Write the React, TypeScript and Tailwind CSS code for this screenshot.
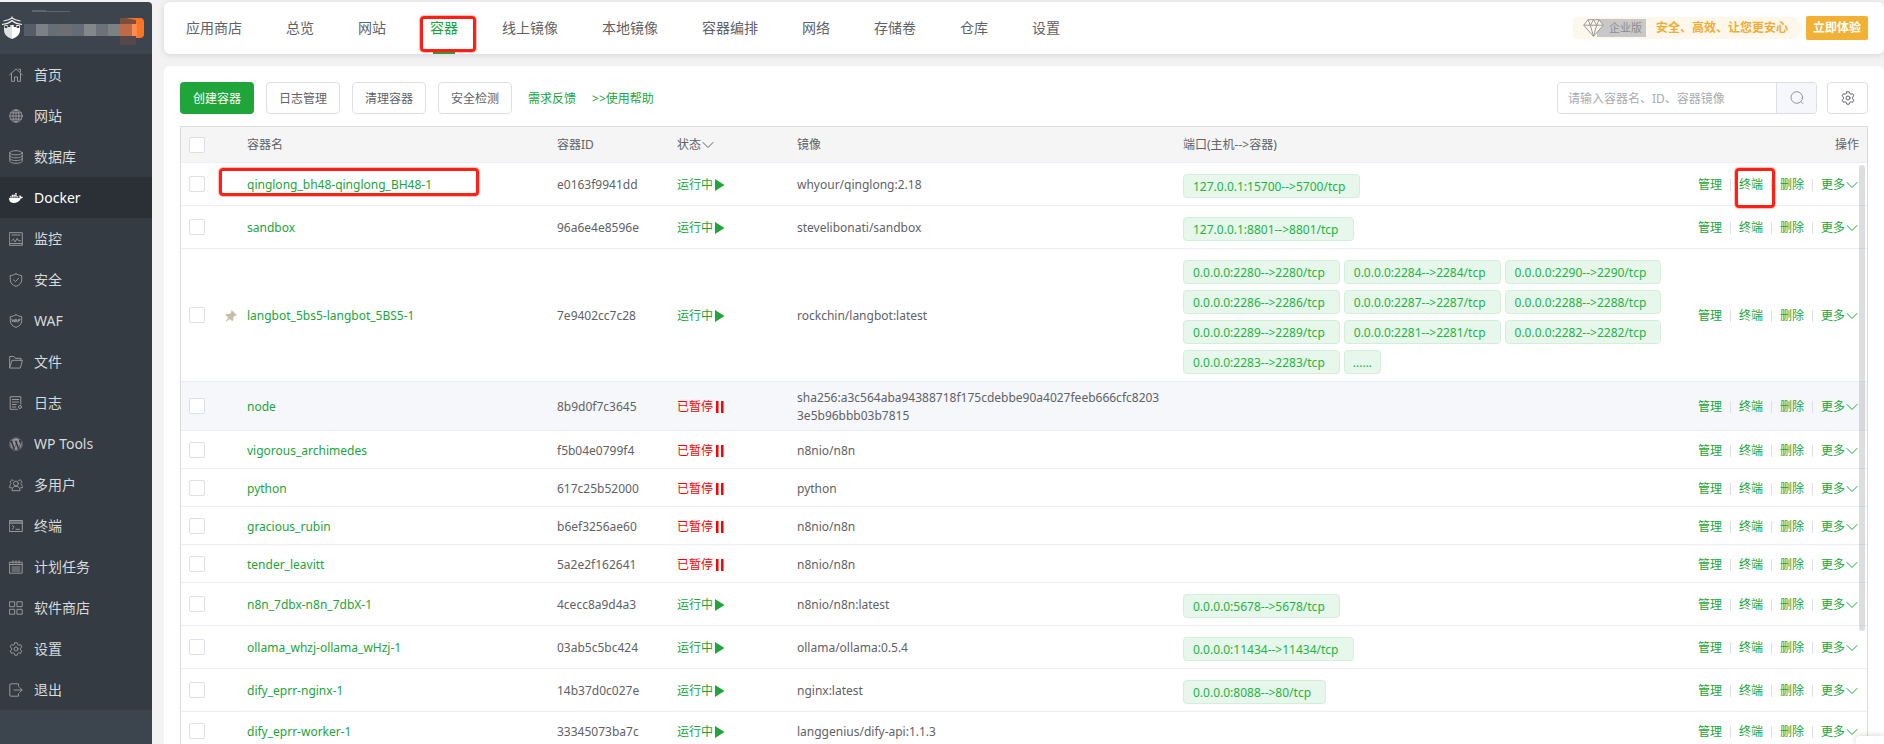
import type { FC, ReactNode } from "react";

import { FaDocker, FaWordpress } from 'react-icons/fa'

type Container = {
    name: string
    id: string
    running: boolean
    image: string
    ports?: string[]
    morePorts?: boolean
    pinned?: boolean
    hover?: boolean
    marked?: boolean
    height: string
}

const containers: Container[] = [
    { name: 'qinglong_bh48-qinglong_BH48-1', id: 'e0163f9941dd', running: true, image: 'whyour/qinglong:2.18', ports: ['127.0.0.1:15700-->5700/tcp'], marked: true, height: 'h-[43px]' },
    { name: 'sandbox', id: '96a6e4e8596e', running: true, image: 'stevelibonati/sandbox', ports: ['127.0.0.1:8801-->8801/tcp'], height: 'h-[43px]' },
    {
        name: 'langbot_5bs5-langbot_5BS5-1', id: '7e9402cc7c28', running: true, image: 'rockchin/langbot:latest', pinned: true, morePorts: true, height: 'h-[133px]',
        ports: [
            '0.0.0.0:2280-->2280/tcp', '0.0.0.0:2284-->2284/tcp', '0.0.0.0:2290-->2290/tcp',
            '0.0.0.0:2286-->2286/tcp', '0.0.0.0:2287-->2287/tcp', '0.0.0.0:2288-->2288/tcp',
            '0.0.0.0:2289-->2289/tcp', '0.0.0.0:2281-->2281/tcp', '0.0.0.0:2282-->2282/tcp',
            '0.0.0.0:2283-->2283/tcp',
        ],
    },
    { name: 'node', id: '8b9d0f7c3645', running: false, image: 'sha256:a3c564aba94388718f175cdebbe90a4027feeb666cfc82033e5b96bbb03b7815', hover: true, height: 'h-[49px]' },
    { name: 'vigorous_archimedes', id: 'f5b04e0799f4', running: false, image: 'n8nio/n8n', height: 'h-[38px]' },
    { name: 'python', id: '617c25b52000', running: false, image: 'python', height: 'h-[38px]' },
    { name: 'gracious_rubin', id: 'b6ef3256ae60', running: false, image: 'n8nio/n8n', height: 'h-[38px]' },
    { name: 'tender_leavitt', id: '5a2e2f162641', running: false, image: 'n8nio/n8n', height: 'h-[38px]' },
    { name: 'n8n_7dbx-n8n_7dbX-1', id: '4cecc8a9d4a3', running: true, image: 'n8nio/n8n:latest', ports: ['0.0.0.0:5678-->5678/tcp'], height: 'h-[43px]' },
    { name: 'ollama_whzj-ollama_wHzj-1', id: '03ab5c5bc424', running: true, image: 'ollama/ollama:0.5.4', ports: ['0.0.0.0:11434-->11434/tcp'], height: 'h-[43px]' },
    { name: 'dify_eprr-nginx-1', id: '14b37d0c027e', running: true, image: 'nginx:latest', ports: ['0.0.0.0:8088-->80/tcp'], height: 'h-[43px]' },
    { name: 'dify_eprr-worker-1', id: '33345073ba7c', running: true, image: 'langgenius/dify-api:1.1.3', height: 'h-[38px]' },
]

const tabs = ['应用商店', '总览', '网站', '容器', '线上镜像', '本地镜像', '容器编排', '网络', '存储卷', '仓库', '设置']

const Line: FC<{ children: ReactNode }> = ({ children }) => (
    <svg viewBox="0 0 14 14" className="size-3.5" fill="none" stroke="currentColor" strokeWidth="1" strokeLinecap="round" strokeLinejoin="round">
        {children}
    </svg>
)

const Chevron = () => <Line><path d="M2 4.500 7 9.500 12 4.500" /></Line>

const Gear = () => (
    <Line>
        <path d="M5.800.8h2.400l.5 1.700 1.200.7 1.700-.5 1.200 2.100L11.500 6.200v1.600l1.300 1.400-1.200 2.100-1.700-.5-1.200.7-.5 1.700H5.800l-.5-1.700-1.200-.7-1.700.5-1.200-2.100 1.300-1.400V6.200L1.200 4.800l1.200-2.100 1.700.5 1.200-.7z" />
        <circle cx="7" cy="7" r="2" />
    </Line>
)

const menu: { label: string; icon: ReactNode }[] = [
    { label: '首页', icon: <Line><path d="M.7 6.8 7 .9l6.300 5.900M2.500 5.600v7.700h3V9h3v4.300h3V5.600M9.800 1.200h1.700v2.600" /></Line> },
    { label: '网站', icon: <Line><circle cx="7" cy="7" r="6.200" /><ellipse cx="7" cy="7" rx="3" ry="6.200" /><path d="M.8 7h12.400M7 .8v12.400M1.800 3.900h10.400M1.800 10.100h10.400" /></Line> },
    { label: '数据库', icon: <Line><ellipse cx="7" cy="2.800" rx="6.200" ry="2.100" /><path d="M.8 2.800v8.400c0 1.200 2.800 2.100 6.200 2.100s6.200-.9 6.200-2.100V2.800M.8 5.700c0 1.200 2.800 2.100 6.200 2.100s6.200-.9 6.200-2.100M.8 8.500c0 1.200 2.800 2.100 6.200 2.100s6.200-.9 6.200-2.100" /></Line> },
    { label: 'Docker', icon: <FaDocker className="size-3.5" /> },
    { label: '监控', icon: <Line><path d="M.7.7h12.600v12.600H.7zM3 3h8M2.500 9l2-2 1.700 3 2-3.600 1.500 2.400h1.800M1 11.500h12" /></Line> },
    { label: '安全', icon: <Line><path d="M7 .7c1.800 1.200 3.600 1.700 5.700 1.800v4.300c0 3-2 5.300-5.700 6.600-3.700-1.300-5.700-3.600-5.700-6.600V2.500C3.400 2.400 5.200 1.900 7 .7zM4.500 6.800l1.900 1.900 3.300-3.500" /></Line> },
    { label: 'WAF', icon: <Line><path d="M7 .7c1.800 1.200 3.600 1.700 5.700 1.800v4.300c0 3-2 5.300-5.700 6.600-3.700-1.300-5.700-3.600-5.700-6.600V2.500C3.400 2.400 5.200 1.900 7 .7zM2.800 5.200l.7 2.800.9-2.200.9 2.200.7-2.800M6.200 8l.9-2.800L8 8M9.200 8V5.300h2M9.200 6.600h1.500" /></Line> },
    { label: '文件', icon: <Line><path d="M.7 12.700V1.500h4.200l1.400 1.800h5.700v2M.7 12.700 3 5.300h10.400l-2 7.400z" /></Line> },
    { label: '日志', icon: <Line><path d="M8.500 13.300H1.200V.7h10.600v7.500M3.300 3.500h6.400M3.300 6h6.400M3.300 8.500h4M3.300 11h3.500" /><circle cx="11" cy="11" r="1.500" /></Line> },
    { label: 'WP Tools', icon: <FaWordpress className="size-3.5" /> },
    { label: '多用户', icon: <Line><circle cx="7" cy="5.500" r="2.400" /><path d="M3 12.300c0-2.600 1.700-4 4-4s4 1.400 4 4zM4.300 2.200a2 2 0 0 0-2 3.500C1.200 6.500.6 7.800.6 9.800H2.500M9.700 2.200a2 2 0 0 1 2 3.500c1.100.8 1.700 2.100 1.700 4.100h-1.900" /></Line> },
    { label: '终端', icon: <Line><path d="M.7 1.500h12.600v11H.7zM.7 3h12.600M.7 4.200h12.600M3.200 6.400l2 1.900-2 1.900M7 10.300h3.500" /></Line> },
    { label: '计划任务', icon: <Line><path d="M.8 2.200h12.400v11H.8zM.8 4.500h12.400M3 7h8M3 9h8M3 11h8M4 .8v2.500M7 .8v2.500M10 .8v2.500" /></Line> },
    { label: '软件商店', icon: <Line><path d="M.8.8h4.900v4.900H.8zM8.300.8h4.900v4.900H8.300zM.8 8.300h4.900v4.900H.8zM8.300 8.300h4.900v4.900H8.300z" /></Line> },
    { label: '设置', icon: <Gear /> },
    { label: '退出', icon: <Line><path d="M9.500 3.200V.8H2Q.8.8.8 2v10q0 1.200 1.200 1.200h7.500v-2.400M5 7h8M10.700 4.500 13.200 7l-2.500 2.500" /></Line> },
]

const mosaic = ['#565d66', '#7b8287', '#676e76', '#6d6d74', '#666c76', '#80888c', '#6b727a', '#7a8286']

// highlight frame around the thing to click
const Mark: FC<{ className: string }> = ({ className }) => (
    <span className={`pointer-events-none absolute z-10 rounded-sm border-[3px] border-[#ff2015] ring-1 ring-[#ff2015]/30 ${className}`} />
)

const Sidebar = () => (
    <aside className="mt-0.5 flex w-38 shrink-0 flex-col rounded-tr bg-[#3c444d]">
        <svg viewBox="0 0 152 52" className="h-13 w-38 shrink-0">
            <path d="M32 8h14v2H32zM46 9h24v1H46z" fill="#5d656d" />
            <path d="M4 23h8v14c-5-1.500-8-5-8-9z" fill="#dfe0e2" />
            <path d="M12 23h8v5c0 4-3 7.500-8 9z" fill="#fff" />
            <path d="M2 22.500c4-.5 8-2 10-4 2 2 6 3.500 10 4M4 19c3-.5 6-1.500 8-3 2 1.500 5 2.500 8 3M12 15v3M6 24v2M9 22v3M15 22v3M18 24v2" fill="none" stroke="#3c444d" strokeWidth="2.500" />
            <path d="M2 22.500c4-.5 8-2 10-4 2 2 6 3.500 10 4M3.500 19c3-.5 6.500-1.500 8.500-3 2 1.500 5.500 2.500 8.500 3M12 14.500v2" fill="none" stroke="#f0f0f0" strokeWidth="1.200" />
            <path d="M120 16h16v27h-16z" fill="#56484a" />
            <path d="M120 16h16v6h-16z" fill="#7d4e3e" />
            <path d="M126 16h14q4 0 4 4v12q0 4-4 4h-4V18z" fill="#ff7424" />
            {mosaic.map((color, i) => (
                <rect key={color} x={24 + i * 12} y="22" width="12" height="12" fill={color} />
            ))}
            <path d="M120 22h12v12h-12z" fill="#bd6a48" />
            <path d="M132 22h5v12h-5z" fill="#ff8d52" />
        </svg>
        <nav className="bg-[#343b42]">
            {menu.map(({ label, icon }) => (
                <a
                    key={label}
                    href="#"
                    className={`flex h-[41px] items-center gap-2.5 pl-2 text-sm ${label === 'Docker' ? 'bg-[#2b2f36] text-white' : 'text-[#d9dadb]'}`}
                >
                    <span className={`flex w-4 justify-center ${label === 'Docker' ? 'text-white' : 'text-[#96999c]'}`}>{icon}</span>
                    {label}
                </a>
            ))}
        </nav>
    </aside>
)

const TopNav = () => (
    <header className="flex h-13 shrink-0 items-center justify-between rounded-md bg-white pr-4 shadow-[0_1px_6px_rgba(0,0,0,0.12)]">
        <nav className="flex h-full text-sm">
            {tabs.map((tab) => (
                <a key={tab} href="#" className={`relative flex items-center px-[22px] ${tab === '容器' ? 'text-[#20a53a]' : 'text-[#606266]'}`}>
                    {tab}
                    {tab === '容器' && <Mark className="top-3.5 right-1 bottom-0.5 left-3" />}
                    {tab === '容器' && <span className="absolute bottom-0 left-1/2 h-0.5 w-[22px] -translate-x-1/2 bg-[#20a53a]" />}
                </a>
            ))}
        </nav>
        <div className="flex items-center">
            <div className="flex h-[22px] items-center gap-2.5 rounded bg-[#fef8ec] px-2.5 text-xs">
                <span className="flex items-center">
                    <svg viewBox="0 0 22 18" className="z-10 -mr-2 h-[18px] w-[22px]" fill="#fef8ec" stroke="#999" strokeLinejoin="round">
                        <path d="M5 .7h11l4.300 5.500L10.500 17.300.7 6.200z" />
                        <path d="M.7 6.200h19.600M5 .7l2.300 5.500 3.200 11.100 3.200-11.100L16 .7M7.300 6.200l3.200-5.500 3.200 5.500" fill="none" />
                    </svg>
                    <span className="flex h-[18px] items-center bg-[#c8c8c8] pr-1 pl-3 text-[11px] text-[#8c8c8c]">企业版</span>
                </span>
                <span className="font-bold text-[#f0ad36]">安全、高效、让您更安心</span>
            </div>
            <svg viewBox="0 0 8 14" className="h-3.5 w-2"><path d="M0 2 6 7 0 12z" fill="#fef8ec" /></svg>
            <a href="#" className="flex h-6 items-center rounded-xs bg-[#f2b134] px-[7px] text-xs font-bold text-white">立即体验</a>
        </div>
    </header>
)

const Toolbar = () => (
    <div className="flex items-center justify-between">
        <div className="flex items-center gap-3">
            <button className="h-8 rounded bg-[#20a53a] px-[13px] pt-0.5 text-white">创建容器</button>
            {['日志管理', '清理容器', '安全检测'].map((label) => (
                <button key={label} className="h-8 rounded border border-[#dcdfe6] px-3 pt-0.5 text-[#606266]">{label}</button>
            ))}
            <a href="#" className="ml-1 pt-0.5 text-[#20a53a]">需求反馈</a>
            <a href="#" className="ml-1 pt-0.5 text-[#20a53a]">&gt;&gt;使用帮助</a>
        </div>
        <div className="flex gap-2.5">
            <div className="flex h-8 overflow-hidden rounded border border-[#dcdfe6]">
                <input type="text" aria-label="搜索容器" placeholder="请输入容器名、ID、容器镜像" className="w-[218px] px-2.5 pt-0.5 placeholder:text-[#a8abb2]" />
                <button aria-label="搜索" className="flex w-10 items-center justify-center border-l border-[#dcdfe6] bg-[#f5f7fa] text-[#909399]">
                    <Line><circle cx="6.800" cy="6.500" r="5.800" /><path d="m10.900 10.600 2 2" /></Line>
                </button>
            </div>
            <button aria-label="设置" className="flex h-8 w-[41px] items-center justify-center rounded border border-[#dcdfe6] text-[#606266]">
                <Gear />
            </button>
        </div>
    </div>
)

const Checkbox: FC<{ label: string }> = ({ label }) => (
    <input type="checkbox" aria-label={label} className="block size-4 appearance-none rounded-xs border border-[#dcdfe6] bg-white" />
)

const Status: FC<{ running: boolean }> = ({ running }) => (
    <button className={`flex items-center ${running ? 'text-[#20a53a]' : 'text-[#ff0000]'}`}>
        {running ? '运行中' : '已暂停'}
        <svg viewBox="0 0 12 12" className="size-3" fill="currentColor">
            {running ? <path d="M2 0 11.500 6 2 12z" /> : <path d="M3 0h2.500v12H3zM8 0h2.500v12H8z" />}
        </svg>
    </button>
)

const Actions: FC<{ marked?: boolean }> = ({ marked }) => (
    <div className="flex items-center justify-end text-[#20a53a]">
        {['管理', '终端', '删除'].map((label) => (
            <span key={label} className="flex items-center">
                <a href="#" className="relative">
                    {label}
                    {marked && label === '终端' && <Mark className="-top-2 -right-3 -left-1 h-10" />}
                </a>
                <span className="mx-2 h-3 w-px bg-[#dcdfe6]" />
            </span>
        ))}
        <button className="flex items-center">更多<Chevron /></button>
    </div>
)

const Row: FC<{ item: Container }> = ({ item }) => (
    <tr className={`${item.height} ${item.hover ? 'bg-[#f5f7fa]' : ''} *:border-b *:border-[#ebeef5] *:px-2`}>
        <td><Checkbox label={item.name} /></td>
        <td className="pt-0.5">
            <div className="relative flex items-center">
                <span className="w-[22px]">
                    {item.pinned && (
                        <svg viewBox="0 0 12 12" className="size-3" fill="#c8bda6">
                            <path d="M6.500 0 12 5l-1.200.8-1.300-.1-1.300 2 .2 2.300-1.200 1.200-2.300-2.300L1.200 11.800l-.6-.4 2.800-3.700L.3 4.900l1.300-1 2.600.2 1.900-1.600z" />
                        </svg>
                    )}
                </span>
                <a href="#" className="text-[#20a53a]">{item.name}</a>
                {item.marked && <Mark className="-top-2 -left-1.5 h-7 w-[260px]" />}
            </div>
        </td>
        <td className="pt-0.5">{item.id}</td>
        <td className="pt-0.5"><Status running={item.running} /></td>
        <td className="pt-0.5 break-all"><p className="mr-1">{item.image}</p></td>
        <td>
            {item.ports && (
                <div className="flex flex-wrap gap-x-1 gap-y-1.5 pt-1 leading-6 text-[#20b53f] *:h-6 *:rounded *:border *:border-[#d2f0d9] *:bg-[#e8f7eb]">
                    {item.ports.map((port) => (
                        <span key={port} className="pr-3.5 pl-[9px]">{port}</span>
                    ))}
                    {item.morePorts && <span className="px-2">......</span>}
                </div>
            )}
        </td>
        <td className="pt-0.5"><Actions marked={item.marked} /></td>
    </tr>
)

const ContainerTable = () => (
    <div className="relative min-h-0 flex-1 overflow-hidden border border-b-0 border-[#dcdcdc]">
        <table className="w-full table-fixed border-separate border-spacing-0 text-left leading-[18px]">
            <colgroup>
                <col className="w-9" />
                <col />
                <col className="w-30" />
                <col className="w-30" />
                <col className="w-[386px]" />
                <col className="w-[500px]" />
                <col className="w-48" />
            </colgroup>
            <thead>
                <tr className="h-9 bg-[#f5f5f5] *:border-b *:border-[#ebeef5] *:px-2 *:font-normal">
                    <th><Checkbox label="全选" /></th>
                    <th><span className="pl-[22px]">容器名</span></th>
                    <th>容器ID</th>
                    <th><button className="flex items-center">状态<Chevron /></button></th>
                    <th>镜像</th>
                    <th>端口(主机--&gt;容器)</th>
                    <th className="text-right">操作</th>
                </tr>
            </thead>
            <tbody>
                {containers.map((item) => <Row key={item.id} item={item} />)}
            </tbody>
        </table>
        <span className="absolute top-[38px] right-0.5 h-[466px] w-1.5 rounded-full bg-[#909399]/30" />
    </div>
)

function App() {
    return (
        <div className="flex h-screen overflow-hidden bg-[#f2f2f2] font-['Noto_Sans','Noto_Sans_CJK_SC',sans-serif] text-xs text-[#606266]">
            <Sidebar />
            <main className="flex min-w-0 flex-1 flex-col gap-3 pt-0.5 pl-3">
                <TopNav />
                <section className="flex min-h-0 flex-1 flex-col gap-3 rounded-t-md bg-white px-4 pt-4">
                    <Toolbar />
                    <ContainerTable />
                </section>
            </main>
            <div className="fixed right-0 bottom-0 h-2 w-7 rounded-tl bg-white shadow-[0_0_6px_rgba(0,0,0,0.2)]" />
        </div>
    )
}

export default App
